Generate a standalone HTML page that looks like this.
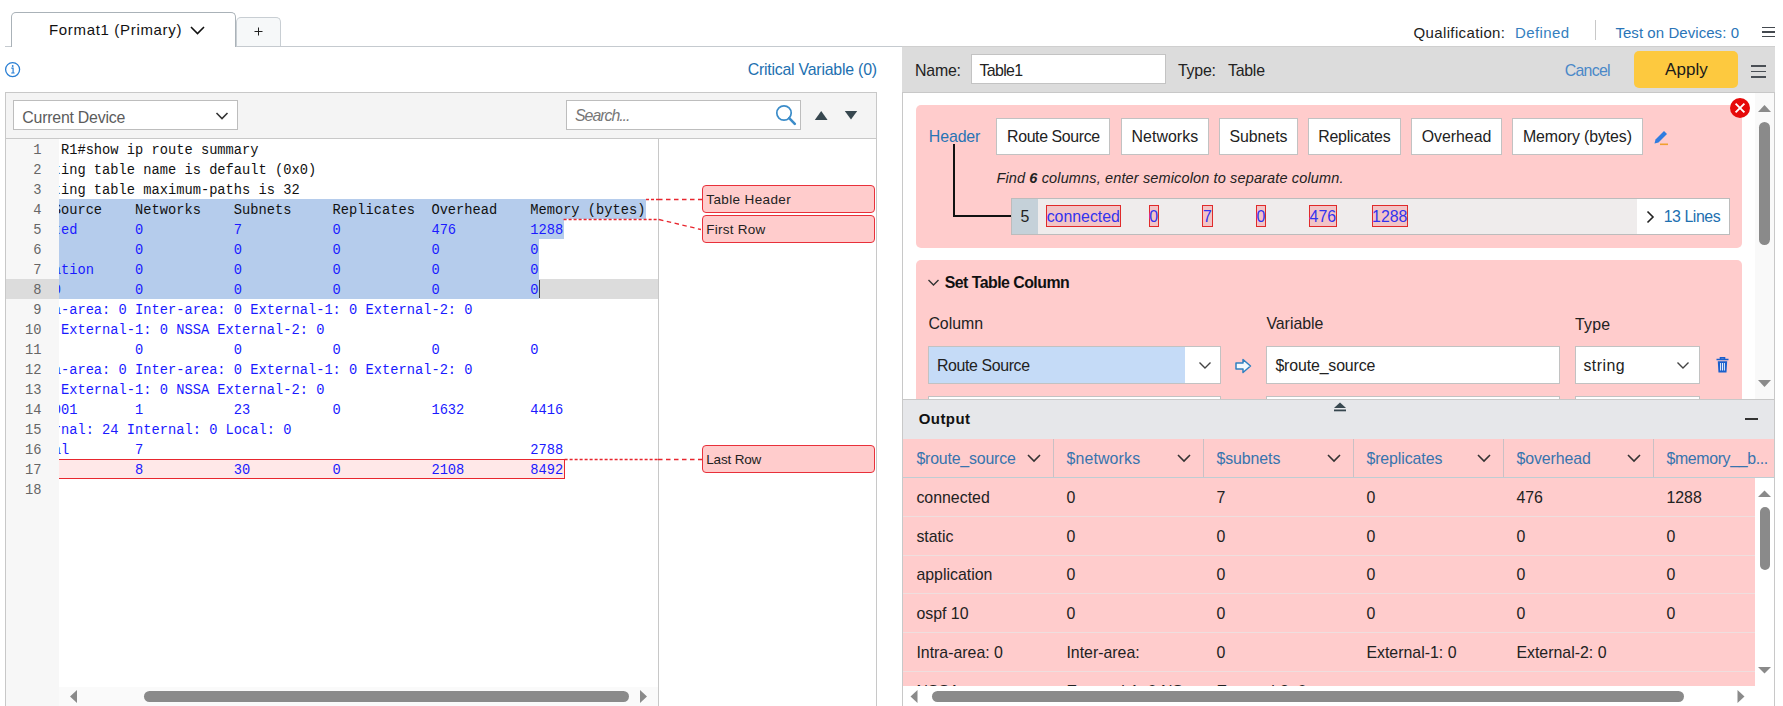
<!DOCTYPE html>
<html><head><meta charset="utf-8"><style>
html,body{margin:0;padding:0;width:1783px;height:706px;overflow:hidden;background:#fff;}
body{position:relative;font-family:'Liberation Sans', sans-serif;}
.a{position:absolute;}
.t{white-space:nowrap;}
</style></head><body>
<div class="a" style="left:5px;top:46px;width:897px;height:1px;background:#c5cacf;"></div>
<div class="a" style="left:11px;top:12px;width:225px;height:35px;background:#fff;box-sizing:border-box;border:1.5px solid #aab2b8;border-bottom:none;border-radius:5px 5px 0 0;"></div>
<div class="a t" id="t1" style="top:19.70px;font-size:15px;line-height:20px;color:#111;letter-spacing:0.670px;left:49px;">Format1 (Primary)</div>
<svg class="a" style="left:188px;top:24px" width="20" height="14"><path d="M3 3 L9.5 9.5 L16 3" fill="none" stroke="#111" stroke-width="1.6"/></svg>
<div class="a" style="left:236px;top:17px;width:45px;height:29px;background:#f6f8f9;box-sizing:border-box;border:1.5px solid #c8ced3;border-bottom:none;border-radius:5px 5px 0 0;"></div>
<svg class="a" style="left:252px;top:25px" width="13" height="13"><path d="M6.5 2.5 V10.5 M2.5 6.5 H10.5" stroke="#222" stroke-width="1"/></svg>
<div class="a t" id="t2" style="top:22.60px;font-size:15px;line-height:20px;color:#222;letter-spacing:0.367px;left:1413.5px;">Qualification:</div>
<div class="a t" id="t3" style="top:22.60px;font-size:15px;line-height:20px;color:#357fc0;letter-spacing:0.382px;left:1515px;">Defined</div>
<div class="a" style="left:1595px;top:20px;width:1px;height:20px;background:#c8c8c8;"></div>
<div class="a t" id="t4" style="top:22.60px;font-size:15px;line-height:20px;color:#2a75b8;letter-spacing:0.061px;left:1615.4px;">Test on Devices: 0</div>
<div class="a" style="left:1762px;top:26.7px;width:13px;height:1.6999999999999993px;background:#44494f;"></div>
<div class="a" style="left:1762px;top:31.2px;width:13px;height:1.6999999999999993px;background:#44494f;"></div>
<div class="a" style="left:1762px;top:35.7px;width:13px;height:1.7000000000000028px;background:#44494f;"></div>
<svg class="a" style="left:4px;top:61px" width="18" height="18"><circle cx="8.6" cy="8.6" r="7" fill="none" stroke="#2a7fd4" stroke-width="1.3"/><path d="M7.3 7.2 H9.1 V12 M7.2 12 H10.6" fill="none" stroke="#2a7fd4" stroke-width="1.2"/><circle cx="8.7" cy="5" r="0.9" fill="#2a7fd4"/></svg>
<div class="a t" id="t5" style="top:59.99px;font-size:15.9px;line-height:20px;color:#1d70b0;letter-spacing:-0.227px;right:906.2px;">Critical Variable (0)</div>
<div class="a" style="left:5px;top:92px;width:872px;height:47px;background:#f4f4f4;box-sizing:border-box;border:1px solid #c8c8c8;"></div>
<div class="a" style="left:13px;top:100px;width:225px;height:30px;background:#fff;box-sizing:border-box;border:1px solid #bdbdbd;"></div>
<div class="a t" id="t6" style="top:108.39px;font-size:15.9px;line-height:20px;color:#5c5c5c;letter-spacing:-0.230px;left:22.3px;">Current Device</div>
<svg class="a" style="left:213px;top:109px" width="18" height="14"><path d="M3.5 4 L9 9.5 L14.5 4" fill="none" stroke="#333" stroke-width="1.6"/></svg>
<div class="a" style="left:566px;top:100px;width:235px;height:30px;background:#fff;box-sizing:border-box;border:1px solid #bdbdbd;"></div>
<div class="a t" id="t7" style="top:106.39px;font-size:15.9px;line-height:20px;color:#777;font-style:italic;letter-spacing:-1.026px;left:575px;">Search...</div>
<svg class="a" style="left:772px;top:102px" width="28" height="26"><circle cx="12" cy="11" r="7.2" fill="none" stroke="#3b8cc9" stroke-width="1.7"/><path d="M17.2 16.2 L22.8 21.8" stroke="#3b8cc9" stroke-width="2.6" stroke-linecap="round"/></svg>
<svg class="a" style="left:812px;top:108px" width="18" height="14"><path d="M2.8 12 L9.2 3 L15.6 12 Z" fill="#37474f"/></svg>
<svg class="a" style="left:842px;top:108px" width="18" height="14"><path d="M2.8 3 L9 11.5 L15.2 3 Z" fill="#37474f"/></svg>
<div class="a" style="left:5px;top:138px;width:1px;height:568px;background:#c8c8c8;"></div>
<div class="a" style="left:876px;top:138px;width:1px;height:568px;background:#c8c8c8;"></div>
<div class="a" style="left:6px;top:139px;width:53px;height:567px;background:#f7f7f7;"></div>
<div class="a" style="left:658px;top:139px;width:1px;height:567px;background:#c8c8c8;"></div>
<div class="a" style="left:6px;top:279px;width:53px;height:20px;background:#dcdcdc;"></div>
<div class="a" style="left:59px;top:279px;width:599px;height:20px;background:#dcdcdc;"></div>
<div class="a" style="left:59px;top:199px;width:587.02px;height:20px;background:#b5ccec;"></div>
<div class="a" style="left:59px;top:219px;width:504.62px;height:20px;background:#b5ccec;"></div>
<div class="a" style="left:59px;top:239px;width:479.9px;height:60px;background:#b5ccec;"></div>
<div class="a" style="left:59px;top:459px;width:505.62px;height:20px;background:#ffe8e8;box-sizing:border-box;border:1.5px solid #e8262e;border-left:none;"></div>
<div class="a" style="left:538.9px;top:280px;width:1.5px;height:18px;background:#444;"></div>
<div class="a" style="left:59px;top:139px;width:599px;height:548px;overflow:hidden;"><div style="position:absolute;left:-55.7px;top:0;font-family:'Liberation Mono', monospace;font-size:13.733px;"><div style="position:absolute;left:0;top:2px;height:20px;line-height:20px;color:#111;white-space:pre">       R1#show ip route summary</div><div style="position:absolute;left:0;top:22px;height:20px;line-height:20px;color:#111;white-space:pre">IP routing table name is default (0x0)</div><div style="position:absolute;left:0;top:42px;height:20px;line-height:20px;color:#111;white-space:pre">IP routing table maximum-paths is 32</div><div style="position:absolute;left:0;top:62px;height:20px;line-height:20px;color:#111;white-space:pre">Route Source    Networks    Subnets     Replicates  Overhead    Memory (bytes)</div><div style="position:absolute;left:0;top:82px;height:20px;line-height:20px;color:#1a1aff;white-space:pre">connected       0           7           0           476         1288</div><div style="position:absolute;left:0;top:102px;height:20px;line-height:20px;color:#1a1aff;white-space:pre">static          0           0           0           0           0</div><div style="position:absolute;left:0;top:122px;height:20px;line-height:20px;color:#1a1aff;white-space:pre">application     0           0           0           0           0</div><div style="position:absolute;left:0;top:142px;height:20px;line-height:20px;color:#1a1aff;white-space:pre">ospf 10         0           0           0           0           0</div><div style="position:absolute;left:0;top:162px;height:20px;line-height:20px;color:#1a1aff;white-space:pre">  Intra-area: 0 Inter-area: 0 External-1: 0 External-2: 0</div><div style="position:absolute;left:0;top:182px;height:20px;line-height:20px;color:#1a1aff;white-space:pre">  NSSA External-1: 0 NSSA External-2: 0</div><div style="position:absolute;left:0;top:202px;height:20px;line-height:20px;color:#1a1aff;white-space:pre">ospf 2          0           0           0           0           0</div><div style="position:absolute;left:0;top:222px;height:20px;line-height:20px;color:#1a1aff;white-space:pre">  Intra-area: 0 Inter-area: 0 External-1: 0 External-2: 0</div><div style="position:absolute;left:0;top:242px;height:20px;line-height:20px;color:#1a1aff;white-space:pre">  NSSA External-1: 0 NSSA External-2: 0</div><div style="position:absolute;left:0;top:262px;height:20px;line-height:20px;color:#1a1aff;white-space:pre">bgp 65001       1           23          0           1632        4416</div><div style="position:absolute;left:0;top:282px;height:20px;line-height:20px;color:#1a1aff;white-space:pre">  External: 24 Internal: 0 Local: 0</div><div style="position:absolute;left:0;top:302px;height:20px;line-height:20px;color:#1a1aff;white-space:pre">internal        7                                               2788</div><div style="position:absolute;left:0;top:322px;height:20px;line-height:20px;color:#1a1aff;white-space:pre">Total           8           30          0           2108        8492</div><div style="position:absolute;left:0;top:342px;height:20px;line-height:20px;color:;white-space:pre"></div></div></div>
<div class="a t" id="t8" style="top:141.05px;font-size:13.733px;line-height:20px;color:#666;font-family:'Liberation Mono', monospace;right:1741.5px;">1</div>
<div class="a t" id="t9" style="top:161.05px;font-size:13.733px;line-height:20px;color:#666;font-family:'Liberation Mono', monospace;right:1741.5px;">2</div>
<div class="a t" id="t10" style="top:181.05px;font-size:13.733px;line-height:20px;color:#666;font-family:'Liberation Mono', monospace;right:1741.5px;">3</div>
<div class="a t" id="t11" style="top:201.05px;font-size:13.733px;line-height:20px;color:#666;font-family:'Liberation Mono', monospace;right:1741.5px;">4</div>
<div class="a t" id="t12" style="top:221.05px;font-size:13.733px;line-height:20px;color:#666;font-family:'Liberation Mono', monospace;right:1741.5px;">5</div>
<div class="a t" id="t13" style="top:241.05px;font-size:13.733px;line-height:20px;color:#666;font-family:'Liberation Mono', monospace;right:1741.5px;">6</div>
<div class="a t" id="t14" style="top:261.05px;font-size:13.733px;line-height:20px;color:#666;font-family:'Liberation Mono', monospace;right:1741.5px;">7</div>
<div class="a t" id="t15" style="top:281.05px;font-size:13.733px;line-height:20px;color:#666;font-family:'Liberation Mono', monospace;right:1741.5px;">8</div>
<div class="a t" id="t16" style="top:301.05px;font-size:13.733px;line-height:20px;color:#666;font-family:'Liberation Mono', monospace;right:1741.5px;">9</div>
<div class="a t" id="t17" style="top:321.05px;font-size:13.733px;line-height:20px;color:#666;font-family:'Liberation Mono', monospace;right:1741.5px;">10</div>
<div class="a t" id="t18" style="top:341.05px;font-size:13.733px;line-height:20px;color:#666;font-family:'Liberation Mono', monospace;right:1741.5px;">11</div>
<div class="a t" id="t19" style="top:361.05px;font-size:13.733px;line-height:20px;color:#666;font-family:'Liberation Mono', monospace;right:1741.5px;">12</div>
<div class="a t" id="t20" style="top:381.05px;font-size:13.733px;line-height:20px;color:#666;font-family:'Liberation Mono', monospace;right:1741.5px;">13</div>
<div class="a t" id="t21" style="top:401.05px;font-size:13.733px;line-height:20px;color:#666;font-family:'Liberation Mono', monospace;right:1741.5px;">14</div>
<div class="a t" id="t22" style="top:421.05px;font-size:13.733px;line-height:20px;color:#666;font-family:'Liberation Mono', monospace;right:1741.5px;">15</div>
<div class="a t" id="t23" style="top:441.05px;font-size:13.733px;line-height:20px;color:#666;font-family:'Liberation Mono', monospace;right:1741.5px;">16</div>
<div class="a t" id="t24" style="top:461.05px;font-size:13.733px;line-height:20px;color:#666;font-family:'Liberation Mono', monospace;right:1741.5px;">17</div>
<div class="a t" id="t25" style="top:481.05px;font-size:13.733px;line-height:20px;color:#666;font-family:'Liberation Mono', monospace;right:1741.5px;">18</div>
<svg class="a" style="left:0;top:0" width="1783" height="706"><path d="M646.02 199.5 H658" stroke="#e8262e" stroke-width="1.3" fill="none" stroke-dasharray="3 2"/><path d="M658 199.5 H702" stroke="#e8262e" stroke-width="1.3" fill="none" stroke-dasharray="4.5 3.5"/><path d="M563.62 219.5 H659" stroke="#e8262e" stroke-width="1.3" fill="none" stroke-dasharray="3 2"/><path d="M659 219.5 L701 229.5" stroke="#e8262e" stroke-width="1.3" fill="none" stroke-dasharray="4.5 3.5"/><path d="M564.62 459.5 H658" stroke="#e8262e" stroke-width="1.3" fill="none" stroke-dasharray="3 2"/><path d="M658 459.5 H702" stroke="#e8262e" stroke-width="1.3" fill="none" stroke-dasharray="4.5 3.5"/></svg>
<div class="a" style="left:702px;top:184.8px;width:173px;height:27.899999999999977px;background:#ffcccc;box-sizing:border-box;border:1.2px solid #e8303a;border-radius:4px;"></div>
<div class="a t" id="t26" style="top:189.92px;font-size:13.5px;line-height:20px;color:#222;letter-spacing:0.373px;left:706.3px;">Table Header</div>
<div class="a" style="left:702px;top:214.8px;width:173px;height:27.899999999999977px;background:#ffcccc;box-sizing:border-box;border:1.2px solid #e8303a;border-radius:4px;"></div>
<div class="a t" id="t27" style="top:219.92px;font-size:13.5px;line-height:20px;color:#222;letter-spacing:0.250px;left:706.3px;">First Row</div>
<div class="a" style="left:702px;top:444.8px;width:173px;height:27.899999999999977px;background:#ffcccc;box-sizing:border-box;border:1.2px solid #e8303a;border-radius:4px;"></div>
<div class="a t" id="t28" style="top:449.92px;font-size:13.5px;line-height:20px;color:#222;letter-spacing:-0.182px;left:706.3px;">Last Row</div>
<div class="a" style="left:59px;top:687px;width:599px;height:19px;background:#fafafa;"></div>
<svg class="a" style="left:66px;top:688px" width="14" height="16"><path d="M11 2 L4 8.5 L11 15 Z" fill="#8a8a8a"/></svg>
<div class="a" style="left:144px;top:691px;width:485px;height:11px;background:#8a8a8a;border-radius:5.5px;"></div>
<svg class="a" style="left:636px;top:688px" width="14" height="16"><path d="M4 2 L11 8.5 L4 15 Z" fill="#8a8a8a"/></svg>
<div class="a" style="left:902px;top:46px;width:873px;height:660px;background:#fff;"></div>
<div class="a" style="left:902px;top:46px;width:1px;height:660px;background:#c8c8c8;"></div>
<div class="a" style="left:1774px;top:46px;width:1px;height:660px;background:#c8c8c8;"></div>
<div class="a" style="left:902px;top:46px;width:873px;height:46px;background:#dcdcdc;"></div>
<div class="a" style="left:902px;top:46px;width:873px;height:1px;background:#cfcfcf;"></div>
<div class="a" style="left:902px;top:92px;width:873px;height:1px;background:#c8c8c8;"></div>
<div class="a" style="left:971px;top:54px;width:195px;height:30px;background:#fff;box-sizing:border-box;border:1px solid #c3c3c3;"></div>
<div class="a t" id="t29" style="top:60.79px;font-size:15.9px;line-height:20px;color:#222;letter-spacing:-0.203px;left:915px;">Name:</div>
<div class="a t" id="t30" style="top:60.79px;font-size:15.9px;line-height:20px;color:#222;letter-spacing:-0.686px;left:979.6px;">Table1</div>
<div class="a t" id="t31" style="top:60.79px;font-size:15.9px;line-height:20px;color:#222;letter-spacing:-0.219px;left:1178px;">Type:</div>
<div class="a t" id="t32" style="top:60.79px;font-size:15.9px;line-height:20px;color:#222;letter-spacing:-0.250px;left:1228px;">Table</div>
<div class="a t" id="t33" style="top:60.59px;font-size:15.9px;line-height:20px;color:#4a88c8;letter-spacing:-0.754px;left:1564.8px;">Cancel</div>
<div class="a" style="left:1634px;top:51px;width:104px;height:37px;background:#fdc93f;border-radius:5px;"></div>
<div class="a t" id="t34" style="top:60.21px;font-size:17px;line-height:20px;color:#1a1a1a;letter-spacing:0.068px;left:1665px;">Apply</div>
<div class="a" style="left:1751px;top:65.2px;width:15px;height:1.7000000000000028px;background:#4a4f55;"></div>
<div class="a" style="left:1751px;top:70.7px;width:15px;height:1.7000000000000028px;background:#4a4f55;"></div>
<div class="a" style="left:1751px;top:76.2px;width:15px;height:1.7000000000000028px;background:#4a4f55;"></div>
<div class="a" style="left:1755px;top:93px;width:19px;height:306px;background:#f9f9f9;"></div>
<svg class="a" style="left:1756px;top:102px" width="18" height="12"><path d="M2 10 L8.5 3 L15 10 Z" fill="#8a8a8a"/></svg>
<div class="a" style="left:1759px;top:122px;width:11px;height:123px;background:#8a8a8a;border-radius:5.5px;"></div>
<svg class="a" style="left:1756px;top:377px" width="18" height="12"><path d="M2 3 L8.5 10 L15 3 Z" fill="#8a8a8a"/></svg>
<div class="a" style="left:916px;top:105px;width:826px;height:143px;background:#ffcccc;border-radius:5px;"></div>
<svg class="a" style="left:1729px;top:97px" width="22" height="22"><circle cx="11" cy="11" r="10" fill="#e60a0a"/><path d="M6.6 6.6 L15.4 15.4 M15.4 6.6 L6.6 15.4" stroke="#fff" stroke-width="1.9"/></svg>
<div class="a t" id="t35" style="top:127.39px;font-size:15.9px;line-height:20px;color:#2874b5;letter-spacing:-0.105px;left:928.8px;">Header</div>
<div class="a" style="left:953.2px;top:144px;width:1.599999999999909px;height:72.6px;background:#111;"></div>
<div class="a" style="left:953.2px;top:215px;width:57.799999999999955px;height:1.5999999999999943px;background:#111;"></div>
<div class="a" style="left:996px;top:118px;width:114px;height:37px;background:#fff;box-sizing:border-box;border:1px solid #c2c2c2;"></div>
<div class="a t" id="t36" style="top:127.39px;font-size:15.9px;line-height:20px;color:#222;letter-spacing:-0.379px;left:853.4000000000001px;width:400px;text-align:center;">Route Source</div>
<div class="a" style="left:1121px;top:118px;width:88px;height:37px;background:#fff;box-sizing:border-box;border:1px solid #c2c2c2;"></div>
<div class="a t" id="t37" style="top:127.39px;font-size:15.9px;line-height:20px;color:#222;letter-spacing:0.054px;left:964.9000000000001px;width:400px;text-align:center;">Networks</div>
<div class="a" style="left:1219px;top:118px;width:79px;height:37px;background:#fff;box-sizing:border-box;border:1px solid #c2c2c2;"></div>
<div class="a t" id="t38" style="top:127.39px;font-size:15.9px;line-height:20px;color:#222;letter-spacing:-0.053px;left:1058.45px;width:400px;text-align:center;">Subnets</div>
<div class="a" style="left:1308px;top:118px;width:93px;height:37px;background:#fff;box-sizing:border-box;border:1px solid #c2c2c2;"></div>
<div class="a t" id="t39" style="top:127.39px;font-size:15.9px;line-height:20px;color:#222;letter-spacing:-0.189px;left:1154.35px;width:400px;text-align:center;">Replicates</div>
<div class="a" style="left:1411px;top:118px;width:91px;height:37px;background:#fff;box-sizing:border-box;border:1px solid #c2c2c2;"></div>
<div class="a t" id="t40" style="top:127.39px;font-size:15.9px;line-height:20px;color:#222;letter-spacing:-0.041px;left:1256.5px;width:400px;text-align:center;">Overhead</div>
<div class="a" style="left:1512px;top:118px;width:131px;height:37px;background:#fff;box-sizing:border-box;border:1px solid #c2c2c2;"></div>
<div class="a t" id="t41" style="top:127.39px;font-size:15.9px;line-height:20px;color:#222;letter-spacing:-0.106px;left:1377.4499999999998px;width:400px;text-align:center;">Memory (bytes)</div>
<svg class="a" style="left:1651px;top:128px" width="20" height="20"><path d="M3.5 15.5 L4.5 11.5 L13 3 L16 6 L7.5 14.5 Z" fill="#2f7ce0"/><rect x="9" y="15.5" width="8" height="1.6" fill="#f0a030"/></svg>
<div class="a t" id="t42" style="top:167.77px;font-size:14.5px;line-height:20px;color:#222;font-style:italic;letter-spacing:0.138px;left:996.4px;">Find <b>6</b> columns, enter semicolon to separate column.</div>
<div class="a" style="left:1011px;top:198px;width:719px;height:37px;background:#efecec;box-sizing:border-box;border:1px solid #bcbcbc;"></div>
<div class="a" style="left:1012px;top:199px;width:26px;height:35px;background:#c5d1d9;"></div>
<div class="a" style="left:1637px;top:199px;width:92px;height:35px;background:#fff;"></div>
<div class="a t" id="t43" style="top:207.39px;font-size:15.9px;line-height:20px;color:#222;left:825px;width:400px;text-align:center;">5</div>
<div class="a" style="left:1046px;top:205px;width:74.59999999999991px;height:22px;background:#f2c4c6;box-sizing:border-box;border:1.2px solid #e02a2a;"></div>
<div class="a t" id="t44" style="top:207.39px;font-size:15.9px;line-height:20px;color:#3333ee;left:883.3px;width:400px;text-align:center;">connected</div>
<div class="a" style="left:1149px;top:205px;width:9.5px;height:22px;background:#f2c4c6;box-sizing:border-box;border:1.2px solid #e02a2a;"></div>
<div class="a t" id="t45" style="top:207.39px;font-size:15.9px;line-height:20px;color:#3333ee;left:953.75px;width:400px;text-align:center;">0</div>
<div class="a" style="left:1202px;top:205px;width:10.799999999999955px;height:22px;background:#f2c4c6;box-sizing:border-box;border:1.2px solid #e02a2a;"></div>
<div class="a t" id="t46" style="top:207.39px;font-size:15.9px;line-height:20px;color:#3333ee;left:1007.4000000000001px;width:400px;text-align:center;">7</div>
<div class="a" style="left:1256px;top:205px;width:9.799999999999955px;height:22px;background:#f2c4c6;box-sizing:border-box;border:1.2px solid #e02a2a;"></div>
<div class="a t" id="t47" style="top:207.39px;font-size:15.9px;line-height:20px;color:#3333ee;left:1060.9px;width:400px;text-align:center;">0</div>
<div class="a" style="left:1309px;top:205px;width:27.700000000000045px;height:22px;background:#f2c4c6;box-sizing:border-box;border:1.2px solid #e02a2a;"></div>
<div class="a t" id="t48" style="top:207.39px;font-size:15.9px;line-height:20px;color:#3333ee;left:1122.85px;width:400px;text-align:center;">476</div>
<div class="a" style="left:1372px;top:205px;width:35.59999999999991px;height:22px;background:#f2c4c6;box-sizing:border-box;border:1.2px solid #e02a2a;"></div>
<div class="a t" id="t49" style="top:207.39px;font-size:15.9px;line-height:20px;color:#3333ee;left:1189.8px;width:400px;text-align:center;">1288</div>
<svg class="a" style="left:1643px;top:208px" width="14" height="18"><path d="M4.5 3.5 L10 9 L4.5 14.5" fill="none" stroke="#222" stroke-width="1.6"/></svg>
<div class="a t" id="t50" style="top:207.39px;font-size:15.9px;line-height:20px;color:#1d70b0;letter-spacing:-0.440px;left:1663.7px;">13 Lines</div>
<div class="a" style="left:916px;top:260px;width:826px;height:160px;background:#ffcccc;border-radius:5px;"></div>
<svg class="a" style="left:926px;top:277px" width="16" height="12"><path d="M2.5 3 L7.5 8 L12.5 3" fill="none" stroke="#333" stroke-width="1.4"/></svg>
<div class="a t" id="t51" style="top:273.39px;font-size:15.9px;line-height:20px;color:#111;font-weight:700;letter-spacing:-0.535px;left:944.7px;">Set Table Column</div>
<div class="a t" id="t52" style="top:314.39px;font-size:15.9px;line-height:20px;color:#222;letter-spacing:-0.033px;left:928.4px;">Column</div>
<div class="a t" id="t53" style="top:314.39px;font-size:15.9px;line-height:20px;color:#222;letter-spacing:-0.018px;left:1266.4px;">Variable</div>
<div class="a t" id="t54" style="top:314.69px;font-size:15.9px;line-height:20px;color:#222;letter-spacing:0.181px;left:1575px;">Type</div>
<div class="a" style="left:928px;top:346px;width:293px;height:38px;background:#fff;box-sizing:border-box;border:1px solid #c2c2c2;"></div>
<div class="a" style="left:929px;top:347px;width:256px;height:36px;background:#c5dbf7;"></div>
<div class="a t" id="t55" style="top:356.19px;font-size:15.9px;line-height:20px;color:#222;letter-spacing:-0.379px;left:937px;">Route Source</div>
<svg class="a" style="left:1196px;top:358px" width="18" height="16"><path d="M3.5 4.5 L9 10 L14.5 4.5" fill="none" stroke="#444" stroke-width="1.4"/></svg>
<svg class="a" style="left:1233px;top:356px" width="22" height="20"><path d="M3 7 H10 V3.5 L17.5 10 L10 16.5 V13 H3 Z" fill="#f4f9fd" stroke="#2f80c0" stroke-width="1.5" stroke-linejoin="round"/></svg>
<div class="a" style="left:1266px;top:346px;width:294px;height:38px;background:#fff;box-sizing:border-box;border:1px solid #c2c2c2;"></div>
<div class="a t" id="t56" style="top:355.79px;font-size:15.9px;line-height:20px;color:#222;letter-spacing:-0.134px;left:1275.4px;">$route_source</div>
<div class="a" style="left:1575px;top:346px;width:125px;height:38px;background:#fff;box-sizing:border-box;border:1px solid #c2c2c2;"></div>
<div class="a t" id="t57" style="top:355.79px;font-size:15.9px;line-height:20px;color:#222;letter-spacing:0.428px;left:1583.5px;">string</div>
<svg class="a" style="left:1674px;top:358px" width="18" height="16"><path d="M3.5 4.5 L9 10 L14.5 4.5" fill="none" stroke="#444" stroke-width="1.4"/></svg>
<svg class="a" style="left:1714px;top:356px" width="18" height="18"><path d="M2.5 3.5 H14.5 M6.5 3.5 V1.8 H10.5 V3.5" fill="none" stroke="#1a5fcc" stroke-width="1.6"/><path d="M3.8 5.2 H13.2 L12.5 16.5 H4.5 Z" fill="#1a5fcc"/><path d="M6.6 7 V14.5 M8.5 7 V14.5 M10.4 7 V14.5" stroke="#fff" stroke-width="0.9"/></svg>
<div class="a" style="left:928px;top:396px;width:293px;height:4px;background:#fff;box-sizing:border-box;border:1px solid #c2c2c2;border-bottom:none;"></div>
<div class="a" style="left:1266px;top:396px;width:294px;height:4px;background:#fff;box-sizing:border-box;border:1px solid #c2c2c2;border-bottom:none;"></div>
<div class="a" style="left:1575px;top:396px;width:125px;height:4px;background:#fff;box-sizing:border-box;border:1px solid #c2c2c2;border-bottom:none;"></div>
<div class="a" style="left:903px;top:399px;width:871px;height:307px;background:#fff;"></div>
<div class="a" style="left:903px;top:399px;width:871px;height:40px;background:#e6e7ea;"></div>
<div class="a" style="left:903px;top:399px;width:871px;height:1px;background:#c8c8c8;"></div>
<div class="a t" id="t58" style="top:409.40px;font-size:15px;line-height:20px;color:#111;font-weight:700;letter-spacing:0.429px;left:918.7px;">Output</div>
<svg class="a" style="left:1331px;top:400px" width="18" height="14"><path d="M3 8 L9 2.5 L15 8 Z" fill="#37474f"/><rect x="3" y="9.5" width="12" height="1.8" fill="#37474f"/></svg>
<div class="a" style="left:1745px;top:418px;width:13px;height:2px;background:#333;"></div>
<div class="a" style="left:903px;top:439px;width:871px;height:38px;background:#ffcccc;"></div>
<div class="a" style="left:903px;top:477px;width:871px;height:1px;background:#bfcdd3;"></div>
<div class="a t" id="t59" style="top:449.39px;font-size:15.9px;line-height:20px;color:#3874ae;letter-spacing:-0.183px;left:916.4px;">$route_source</div>
<svg class="a" style="left:1025px;top:451px" width="18" height="14"><path d="M3 4 L9 10 L15 4" fill="none" stroke="#333" stroke-width="1.6"/></svg>
<div class="a" style="left:1052.5px;top:439px;width:1.0px;height:38px;background:#c9c0c4;"></div>
<div class="a t" id="t60" style="top:449.39px;font-size:15.9px;line-height:20px;color:#3874ae;letter-spacing:0.158px;left:1066.4px;">$networks</div>
<svg class="a" style="left:1175px;top:451px" width="18" height="14"><path d="M3 4 L9 10 L15 4" fill="none" stroke="#333" stroke-width="1.6"/></svg>
<div class="a" style="left:1202.5px;top:439px;width:1.0px;height:38px;background:#c9c0c4;"></div>
<div class="a t" id="t61" style="top:449.39px;font-size:15.9px;line-height:20px;color:#3874ae;letter-spacing:-0.072px;left:1216.4px;">$subnets</div>
<svg class="a" style="left:1325px;top:451px" width="18" height="14"><path d="M3 4 L9 10 L15 4" fill="none" stroke="#333" stroke-width="1.6"/></svg>
<div class="a" style="left:1352.5px;top:439px;width:1.0px;height:38px;background:#c9c0c4;"></div>
<div class="a t" id="t62" style="top:449.39px;font-size:15.9px;line-height:20px;color:#3874ae;letter-spacing:-0.085px;left:1366.4px;">$replicates</div>
<svg class="a" style="left:1475px;top:451px" width="18" height="14"><path d="M3 4 L9 10 L15 4" fill="none" stroke="#333" stroke-width="1.6"/></svg>
<div class="a" style="left:1502.5px;top:439px;width:1.0px;height:38px;background:#c9c0c4;"></div>
<div class="a t" id="t63" style="top:449.39px;font-size:15.9px;line-height:20px;color:#3874ae;letter-spacing:-0.089px;left:1516.4px;">$overhead</div>
<svg class="a" style="left:1625px;top:451px" width="18" height="14"><path d="M3 4 L9 10 L15 4" fill="none" stroke="#333" stroke-width="1.6"/></svg>
<div class="a" style="left:1652.5px;top:439px;width:1.0px;height:38px;background:#c9c0c4;"></div>
<div class="a t" id="t64" style="top:449.39px;font-size:15.9px;line-height:20px;color:#3874ae;letter-spacing:-0.349px;left:1666.4px;">$memory__b...</div>
<div class="a" style="left:903px;top:478px;width:852px;height:208px;background:#ffcccc;"></div>
<div class="a t" id="t65" style="top:487.89px;font-size:15.9px;line-height:20px;color:#222;left:916.4px;">connected</div>
<div class="a t" id="t66" style="top:487.89px;font-size:15.9px;line-height:20px;color:#222;left:1066.4px;">0</div>
<div class="a t" id="t67" style="top:487.89px;font-size:15.9px;line-height:20px;color:#222;left:1216.4px;">7</div>
<div class="a t" id="t68" style="top:487.89px;font-size:15.9px;line-height:20px;color:#222;left:1366.4px;">0</div>
<div class="a t" id="t69" style="top:487.89px;font-size:15.9px;line-height:20px;color:#222;left:1516.4px;">476</div>
<div class="a t" id="t70" style="top:487.89px;font-size:15.9px;line-height:20px;color:#222;left:1666.4px;">1288</div>
<div class="a" style="left:903px;top:515.75px;width:852px;height:1.2000000000000455px;background:#efdede;"></div>
<div class="a t" id="t71" style="top:526.64px;font-size:15.9px;line-height:20px;color:#222;left:916.4px;">static</div>
<div class="a t" id="t72" style="top:526.64px;font-size:15.9px;line-height:20px;color:#222;left:1066.4px;">0</div>
<div class="a t" id="t73" style="top:526.64px;font-size:15.9px;line-height:20px;color:#222;left:1216.4px;">0</div>
<div class="a t" id="t74" style="top:526.64px;font-size:15.9px;line-height:20px;color:#222;left:1366.4px;">0</div>
<div class="a t" id="t75" style="top:526.64px;font-size:15.9px;line-height:20px;color:#222;left:1516.4px;">0</div>
<div class="a t" id="t76" style="top:526.64px;font-size:15.9px;line-height:20px;color:#222;left:1666.4px;">0</div>
<div class="a" style="left:903px;top:554.5px;width:852px;height:1.2000000000000455px;background:#efdede;"></div>
<div class="a t" id="t77" style="top:565.39px;font-size:15.9px;line-height:20px;color:#222;left:916.4px;">application</div>
<div class="a t" id="t78" style="top:565.39px;font-size:15.9px;line-height:20px;color:#222;left:1066.4px;">0</div>
<div class="a t" id="t79" style="top:565.39px;font-size:15.9px;line-height:20px;color:#222;left:1216.4px;">0</div>
<div class="a t" id="t80" style="top:565.39px;font-size:15.9px;line-height:20px;color:#222;left:1366.4px;">0</div>
<div class="a t" id="t81" style="top:565.39px;font-size:15.9px;line-height:20px;color:#222;left:1516.4px;">0</div>
<div class="a t" id="t82" style="top:565.39px;font-size:15.9px;line-height:20px;color:#222;left:1666.4px;">0</div>
<div class="a" style="left:903px;top:593.25px;width:852px;height:1.2000000000000455px;background:#efdede;"></div>
<div class="a t" id="t83" style="top:604.14px;font-size:15.9px;line-height:20px;color:#222;left:916.4px;">ospf 10</div>
<div class="a t" id="t84" style="top:604.14px;font-size:15.9px;line-height:20px;color:#222;left:1066.4px;">0</div>
<div class="a t" id="t85" style="top:604.14px;font-size:15.9px;line-height:20px;color:#222;left:1216.4px;">0</div>
<div class="a t" id="t86" style="top:604.14px;font-size:15.9px;line-height:20px;color:#222;left:1366.4px;">0</div>
<div class="a t" id="t87" style="top:604.14px;font-size:15.9px;line-height:20px;color:#222;left:1516.4px;">0</div>
<div class="a t" id="t88" style="top:604.14px;font-size:15.9px;line-height:20px;color:#222;left:1666.4px;">0</div>
<div class="a" style="left:903px;top:632.0px;width:852px;height:1.2000000000000455px;background:#efdede;"></div>
<div class="a t" id="t89" style="top:642.89px;font-size:15.9px;line-height:20px;color:#222;left:916.4px;">Intra-area: 0</div>
<div class="a t" id="t90" style="top:642.89px;font-size:15.9px;line-height:20px;color:#222;left:1066.4px;">Inter-area:</div>
<div class="a t" id="t91" style="top:642.89px;font-size:15.9px;line-height:20px;color:#222;left:1216.4px;">0</div>
<div class="a t" id="t92" style="top:642.89px;font-size:15.9px;line-height:20px;color:#222;left:1366.4px;">External-1: 0</div>
<div class="a t" id="t93" style="top:642.89px;font-size:15.9px;line-height:20px;color:#222;left:1516.4px;">External-2: 0</div>
<div class="a" style="left:903px;top:670.75px;width:852px;height:1.2000000000000455px;background:#efdede;"></div>
<div class="a t" id="t94" style="top:681.64px;font-size:15.9px;line-height:20px;color:#222;left:916.4px;">NSSA</div>
<div class="a t" id="t95" style="top:681.64px;font-size:15.9px;line-height:20px;color:#222;left:1066.4px;">External-1: 0 NS</div>
<div class="a t" id="t96" style="top:681.64px;font-size:15.9px;line-height:20px;color:#222;left:1216.4px;">External-2: 0</div>
<div class="a" style="left:903px;top:686px;width:871px;height:20px;background:#fff;"></div>
<svg class="a" style="left:907px;top:688px" width="14" height="16"><path d="M10.5 2 L3.5 8.5 L10.5 15 Z" fill="#8a8a8a"/></svg>
<div class="a" style="left:932px;top:691px;width:752px;height:11px;background:#8a8a8a;border-radius:5.5px;"></div>
<svg class="a" style="left:1734px;top:688px" width="14" height="16"><path d="M3.5 2 L10.5 8.5 L3.5 15 Z" fill="#8a8a8a"/></svg>
<div class="a" style="left:1755px;top:478px;width:19px;height:208px;background:#fff;"></div>
<svg class="a" style="left:1756px;top:488px" width="18" height="12"><path d="M2 9 L8.5 2.5 L15 9 Z" fill="#8a8a8a"/></svg>
<div class="a" style="left:1759.5px;top:507px;width:10.5px;height:63px;background:#8a8a8a;border-radius:5px;"></div>
<svg class="a" style="left:1756px;top:664px" width="18" height="12"><path d="M2 3 L8.5 9.5 L15 3 Z" fill="#8a8a8a"/></svg>
</body></html>
